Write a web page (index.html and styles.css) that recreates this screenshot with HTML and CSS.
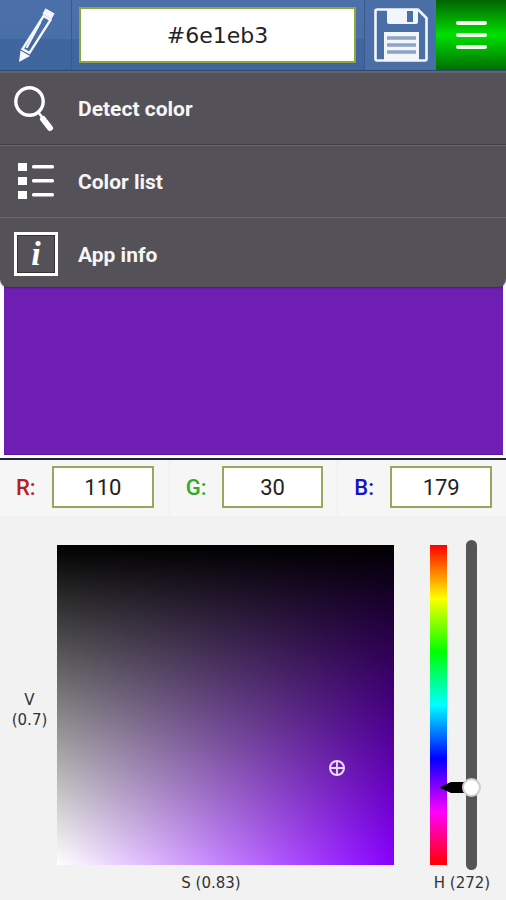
FILE: index.html
```html
<!DOCTYPE html>
<html lang="en">
<head>
	<meta charset="UTF-8">
	<meta name="viewport" content="width=device-width, initial-scale=1.0">
	<title>Color picker</title>
	<link rel="stylesheet" href="styles.css">
</head>
<body>
	<div class="app">
		<div class="topbar">
			<div class="btn btn_pencil">
				<svg width="40" height="56" viewBox="0 0 40 56">
					<g fill="none" stroke="#f4f7fb" stroke-width="2.4">
						<path d="M31 3 L38 7 L36 10.500 L29 6.500 Z" fill="#f4f7fb"/>
						<path d="M28.500 9 L35.500 13 L14.500 46 L7.500 42 Z"/>
						<path d="M25.500 15 L11.500 41" stroke-width="2"/>
					</g>
					<path d="M5.500 43.500 L15 49 L4 55 Z" fill="#f4f7fb"/>
				</svg>
			</div>
			<div class="hex_wrap"><div class="hex_field">#6e1eb3</div></div>
			<div class="btn btn_save">
				<svg width="54" height="54" viewBox="0 0 54 54">
					<path d="M3 1.500 H44 L52.500 10 V51 Q52.500 52.500 51 52.500 H3 Q1.500 52.500 1.500 51 V3 Q1.500 1.500 3 1.500 Z" fill="none" stroke="#f2f5fa" stroke-width="2.600"/>
					<path d="M13 2 H44 V14 Q44 16 42 16 H15 Q13 16 13 14 Z" fill="#f2f5fa"/>
					<rect x="33" y="3" width="6" height="11" fill="#4a6ea6"/>
					<rect x="10" y="24" width="35" height="29" fill="#f2f5fa"/>
					<path d="M13 30 H42 M13 37 H42 M13 44 H42" stroke="#8da3c5" stroke-width="3.500"/>
				</svg>
			</div>
			<div class="btn btn_menu">
				<span></span><span></span><span></span>
			</div>
		</div>

		<div class="menu">
			<div class="menu_row">
				<svg class="menu_icon" width="42" height="48" viewBox="0 0 42 48">
					<circle cx="15.500" cy="16.500" r="13.700" fill="none" stroke="#fff" stroke-width="3.400"/>
					<path d="M24 27 L28 32" stroke="#fff" stroke-width="2.500"/>
					<path d="M29 34 L36 43" stroke="#fff" stroke-width="6" stroke-linecap="round"/>
				</svg>
				<span>Detect color</span>
			</div>
			<div class="menu_row">
				<svg class="menu_icon" width="42" height="40" viewBox="0 0 42 40">
					<g fill="#fff">
						<rect x="4" y="1" width="9" height="8"/>
						<rect x="4" y="15" width="9" height="8"/>
						<rect x="4" y="29" width="9" height="8"/>
						<rect x="18" y="3" width="22" height="3.600" rx="1.500"/>
						<rect x="18" y="17" width="22" height="3.600" rx="1.500"/>
						<rect x="18" y="31" width="22" height="3.600" rx="1.500"/>
					</g>
				</svg>
				<span>Color list</span>
			</div>
			<div class="menu_row">
				<div class="info_icon">i</div>
				<span>App info</span>
			</div>
		</div>

		<div class="preview_wrap"><div class="preview"></div></div>

		<div class="rgb_row">
			<div class="rgb_cell"><label class="lbl_r">R:</label><div class="rgb_field">110</div></div>
			<div class="rgb_cell"><label class="lbl_g">G:</label><div class="rgb_field">30</div></div>
			<div class="rgb_cell"><label class="lbl_b">B:</label><div class="rgb_field">179</div></div>
		</div>

		<div class="picker">
			<div class="v_label">V<br>(0.7)</div>
			<div class="sv_col">
				<div class="sv_box">
					<svg class="sv_mark" width="18" height="18" viewBox="0 0 18 18">
						<circle cx="9" cy="9" r="7" fill="none" stroke="#eadcf5" stroke-width="2"/>
						<path d="M9 2 V16 M2 9 H16" stroke="#eadcf5" stroke-width="1.800"/>
					</svg>
				</div>
				<div class="s_label">S (0.83)</div>
			</div>
			<div class="h_col">
				<div class="h_top">
					<div class="hue_strip"></div>
					<div class="slider">
						<div class="slider_pointer"></div>
						<div class="slider_thumb"></div>
					</div>
				</div>
				<div class="h_label">H (272)</div>
			</div>
		</div>
	</div>
</body>
</html>
```

FILE: styles.css
```css
html, body {
	margin: 0;
	padding: 0;
}
* {
	box-sizing: border-box;
}
body {
	background-color: #f2f2f2;
	font-family: Roboto, "Liberation Sans", sans-serif;
}
.app {
	position: relative;
	width: 506px;
	height: 900px;
	overflow: hidden;
}

/* top bar */
.topbar {
	display: flex;
	height: 71px;
	background: linear-gradient(#4c71aa 0, #4a6fa8 55%, #41669f 56%, #3f659f 100%);
	border-bottom: 1px solid #2e4a75;
}
.btn {
	display: flex;
	align-items: center;
	justify-content: center;
	flex: none;
}
.btn_pencil {
	width: 72px;
	border-right: 1px solid #3a5a8c;
	padding: 0 2px 1px 0;
}
.hex_wrap {
	flex: 1;
	display: flex;
	align-items: center;
	padding: 0 8px 0 7px;
}
.hex_field {
	width: 100%;
	height: 56px;
	background-color: #fff;
	border: 2px solid #8fa63c;
	display: flex;
	align-items: center;
	justify-content: center;
	font-family: "DejaVu Sans", sans-serif;
	font-size: 22px;
	color: #222;
}
.btn_save {
	width: 72px;
	border-left: 1px solid #3a5a8c;
	background-color: #4a6ea6;
}
.btn_menu {
	width: 70px;
	flex-direction: column;
	gap: 8px;
	background: linear-gradient(#006400 0, #00e000 50%, #006d00 100%);
}
.btn_menu span {
	width: 31px;
	height: 4px;
	border-radius: 2px;
	background-color: #f0fbe8;
}

/* dropdown over the preview */
.menu {
	position: absolute;
	top: 71px;
	left: 0;
	width: 506px;
	height: 216px;
	background-color: #545159;
	border-top: 2px solid #66656a;
	border-radius: 0 0 8px 8px;
	box-shadow: 0 1px 2px rgba(0,0,0,0.3);
}
.menu_row {
	position: relative;
	display: flex;
	align-items: center;
	height: 72px;
	padding: 1px 0 0 78px;
	border-bottom: 1px solid #403e44;
	box-shadow: 0 1px 0 #6a686f;
	color: #f6f6f6;
	font-size: 21px;
	font-weight: 700;
}
.menu_row + .menu_row {
	margin-top: 1px;
	border-bottom: 1px solid #6a686f;
	box-shadow: none;
}
.menu_row:last-child {
	border-bottom: 0;
	height: 70px;
}
.menu_icon, .info_icon {
	position: absolute;
	left: 14px;
	top: 50%;
	transform: translateY(-50%);
}
.info_icon {
	width: 44px;
	height: 44px;
	border: 3px solid #fff;
	outline: 1px solid #333;
	outline-offset: -4px;
	display: flex;
	align-items: center;
	justify-content: center;
	font-family: "Liberation Serif", serif;
	font-style: italic;
	font-weight: 700;
	font-size: 34px;
	color: #fff;
}

/* colour preview */
.preview_wrap {
	height: 389px;
	padding: 0 3px 3px 4px;
	background-color: #fff;
	border-bottom: 2px solid #22223a;
}
.preview {
	height: 100%;
	background-color: #6e1eb3;
	border-bottom: 1px solid #5a1698;
}

/* r g b inputs */
.rgb_row {
	display: flex;
	height: 57px;
	background-color: #f6f6f6;
	border-bottom: 1px solid #efefef;
}
.rgb_cell {
	flex: 1;
	display: flex;
	align-items: center;
	padding: 0 14px 2px 16px;
	border-left: 1px solid #eeeeee;
}
.rgb_cell:first-child {
	border-left: 0;
	padding-right: 15px;
}
.rgb_cell label {
	width: 36px;
	flex: none;
	font-size: 22px;
	font-weight: 500;
}
.lbl_r { color: #b3211f; }
.lbl_g { color: #35aa2a; }
.lbl_b { color: #1414c4; }
.rgb_field {
	flex: 1;
	height: 42px;
	background-color: #fff;
	border: 2px solid #97a85c;
	display: flex;
	align-items: center;
	justify-content: center;
	font-size: 22px;
	color: #222;
}

/* s v h picker */
.picker {
	display: flex;
	padding-top: 28px;
	height: 383px;
	background-color: #f2f2f2;
}
.v_label {
	width: 57px;
	flex: none;
	height: 320px;
	padding: 145px 0 0 2px;
	text-align: center;
	font-family: "DejaVu Sans", sans-serif;
	font-size: 15px;
	line-height: 20px;
	color: #333;
}
.sv_col {
	width: 337px;
	flex: none;
}
.sv_box {
	position: relative;
	height: 320px;
	background:
		linear-gradient(to top, rgba(0,0,0,0), #000),
		linear-gradient(to right, #fff, #8800ff);
}
.sv_mark {
	position: absolute;
	left: 271px;
	top: 214px;
}
.s_label, .h_label {
	text-align: center;
	font-family: "DejaVu Sans", sans-serif;
	font-size: 15px;
	line-height: 18px;
	color: #333;
}
.s_label {
	margin-top: 9px;
	padding-right: 29px;
}
.h_col {
	flex: 1;
}
.h_top {
	display: flex;
	height: 320px;
	padding-left: 36px;
}
.hue_strip {
	width: 17px;
	height: 320px;
	background: linear-gradient(#ff0000, #ffff00 16.67%, #00ff00 33.33%, #00ffff 50%, #0000ff 66.67%, #ff00ff 83.33%, #ff0000);
}
.slider {
	position: relative;
	width: 11px;
	height: 330px;
	margin: -5px 0 0 19px;
	flex: none;
	border-radius: 6px;
	background-color: #555;
}
.slider_thumb {
	position: absolute;
	left: -4px;
	top: 238px;
	width: 19px;
	height: 19px;
	border-radius: 50%;
	background-color: #fff;
	border: 2px solid #cfcfcf;
}
.slider_pointer {
	position: absolute;
	left: -27px;
	top: 242px;
	width: 30px;
	height: 11px;
	background-color: #000;
	clip-path: polygon(0 50%, 40% 0, 100% 0, 100% 100%, 40% 100%);
}
.h_label {
	margin-top: 9px;
	padding-left: 24px;
	white-space: nowrap;
}
```
